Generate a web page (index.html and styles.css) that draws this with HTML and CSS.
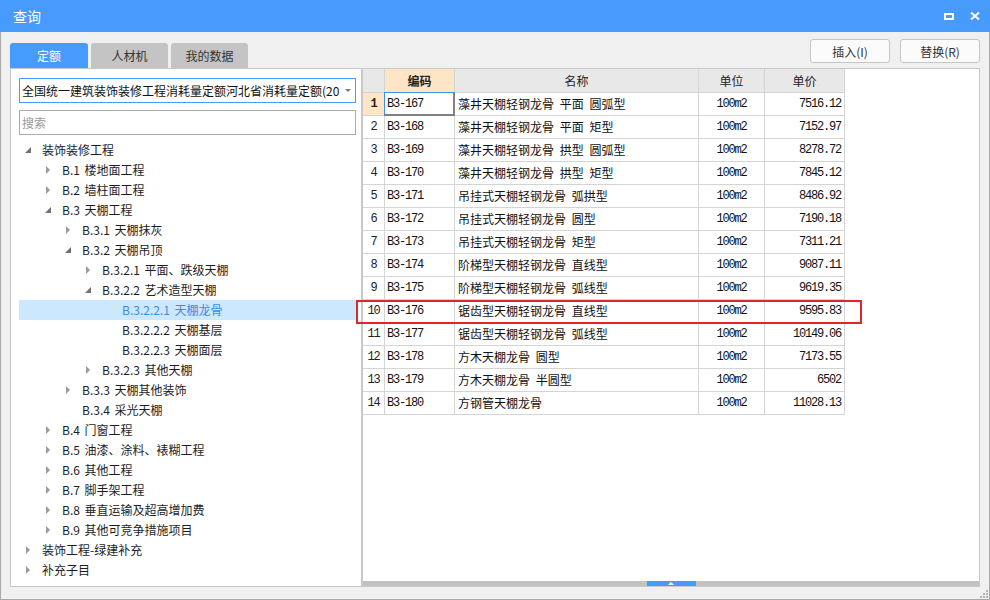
FILE: index.html
```html
<!DOCTYPE html>
<html lang="zh">
<head>
<meta charset="utf-8">
<title>查询</title>
<link rel="stylesheet" href="styles.css">
</head>
<body>
<div class="window">
  <div class="titlebar">
    <span class="title">查询</span>
    <div class="win-btns">
      <svg width="10" height="7" viewBox="0 0 10 7"><rect x="1" y="1" width="8" height="5" fill="none" stroke="#fff" stroke-width="2"/></svg>
      <svg width="10" height="8" viewBox="0 0 10 8"><path d="M1 0.5L9 7.5M9 0.5L1 7.5" stroke="#fff" stroke-width="2"/></svg>
    </div>
  </div>
  <div class="main">
    <div class="leftcol">
      <div class="tabs">
        <div class="tab active">定额</div>
        <div class="tab">人材机</div>
        <div class="tab">我的数据</div>
      </div>
      <div class="left-panel">
        <div class="combo">
          <span class="combo-text">全国统一建筑装饰装修工程消耗量定额河北省消耗量定额(2012)</span>
          <svg class="combo-arrow" width="6" height="4" viewBox="0 0 6 4"><path d="M0 0H6L3 3Z" fill="#7a7a7a"/></svg>
        </div>
        <div class="search">搜索</div>
        <div class="tree">
          <div class="node l0"><span class="toggle"><svg width="10" height="10" viewBox="0 0 10 10"><path d="M8 2V8H2Z" fill="#707070"/></svg></span>装饰装修工程</div>
          <div class="node l1"><span class="toggle"><svg width="10" height="10" viewBox="0 0 10 10"><path d="M3 1L7 5L3 9Z" fill="#9a9a9a"/></svg></span>B.1 楼地面工程</div>
          <div class="node l1"><span class="toggle"><svg width="10" height="10" viewBox="0 0 10 10"><path d="M3 1L7 5L3 9Z" fill="#9a9a9a"/></svg></span>B.2 墙柱面工程</div>
          <div class="node l1"><span class="toggle"><svg width="10" height="10" viewBox="0 0 10 10"><path d="M8 2V8H2Z" fill="#707070"/></svg></span>B.3 天棚工程</div>
          <div class="node l2"><span class="toggle"><svg width="10" height="10" viewBox="0 0 10 10"><path d="M3 1L7 5L3 9Z" fill="#9a9a9a"/></svg></span>B.3.1 天棚抹灰</div>
          <div class="node l2"><span class="toggle"><svg width="10" height="10" viewBox="0 0 10 10"><path d="M8 2V8H2Z" fill="#707070"/></svg></span>B.3.2 天棚吊顶</div>
          <div class="node l3"><span class="toggle"><svg width="10" height="10" viewBox="0 0 10 10"><path d="M3 1L7 5L3 9Z" fill="#9a9a9a"/></svg></span>B.3.2.1 平面、跌级天棚</div>
          <div class="node l3"><span class="toggle"><svg width="10" height="10" viewBox="0 0 10 10"><path d="M8 2V8H2Z" fill="#707070"/></svg></span>B.3.2.2 艺术造型天棚</div>
          <div class="node l4 selected"><span class="toggle"></span>B.3.2.2.1 天棚龙骨</div>
          <div class="node l4"><span class="toggle"></span>B.3.2.2.2 天棚基层</div>
          <div class="node l4"><span class="toggle"></span>B.3.2.2.3 天棚面层</div>
          <div class="node l3"><span class="toggle"><svg width="10" height="10" viewBox="0 0 10 10"><path d="M3 1L7 5L3 9Z" fill="#9a9a9a"/></svg></span>B.3.2.3 其他天棚</div>
          <div class="node l2"><span class="toggle"><svg width="10" height="10" viewBox="0 0 10 10"><path d="M3 1L7 5L3 9Z" fill="#9a9a9a"/></svg></span>B.3.3 天棚其他装饰</div>
          <div class="node l2"><span class="toggle"></span>B.3.4 采光天棚</div>
          <div class="node l1"><span class="toggle"><svg width="10" height="10" viewBox="0 0 10 10"><path d="M3 1L7 5L3 9Z" fill="#9a9a9a"/></svg></span>B.4 门窗工程</div>
          <div class="node l1"><span class="toggle"><svg width="10" height="10" viewBox="0 0 10 10"><path d="M3 1L7 5L3 9Z" fill="#9a9a9a"/></svg></span>B.5 油漆、涂料、裱糊工程</div>
          <div class="node l1"><span class="toggle"><svg width="10" height="10" viewBox="0 0 10 10"><path d="M3 1L7 5L3 9Z" fill="#9a9a9a"/></svg></span>B.6 其他工程</div>
          <div class="node l1"><span class="toggle"><svg width="10" height="10" viewBox="0 0 10 10"><path d="M3 1L7 5L3 9Z" fill="#9a9a9a"/></svg></span>B.7 脚手架工程</div>
          <div class="node l1"><span class="toggle"><svg width="10" height="10" viewBox="0 0 10 10"><path d="M3 1L7 5L3 9Z" fill="#9a9a9a"/></svg></span>B.8 垂直运输及超高增加费</div>
          <div class="node l1"><span class="toggle"><svg width="10" height="10" viewBox="0 0 10 10"><path d="M3 1L7 5L3 9Z" fill="#9a9a9a"/></svg></span>B.9 其他可竞争措施项目</div>
          <div class="node l0"><span class="toggle"><svg width="10" height="10" viewBox="0 0 10 10"><path d="M3 1L7 5L3 9Z" fill="#9a9a9a"/></svg></span>装饰工程-绿建补充</div>
          <div class="node l0"><span class="toggle"><svg width="10" height="10" viewBox="0 0 10 10"><path d="M3 1L7 5L3 9Z" fill="#9a9a9a"/></svg></span>补充子目</div>
        </div>
      </div>
    </div>
    <div class="rightcol">
      <div class="btnrow">
        <button class="btn">插入(I)</button>
        <button class="btn">替换(R)</button>
      </div>
      <div class="right-panel">
        <div class="grid">
          <div class="row head">
            <div class="c num"></div>
            <div class="c code-h">编码</div>
            <div class="c">名称</div>
            <div class="c">单位</div>
            <div class="c">单价</div>
          </div>
          <div class="row"><div class="c num cur">1</div><div class="c code focus">B3-167</div><div class="c name">藻井天棚轻钢龙骨 平面 圆弧型</div><div class="c unit">100m2</div><div class="c price">7516.12</div></div>
          <div class="row"><div class="c num">2</div><div class="c code">B3-168</div><div class="c name">藻井天棚轻钢龙骨 平面 矩型</div><div class="c unit">100m2</div><div class="c price">7152.97</div></div>
          <div class="row"><div class="c num">3</div><div class="c code">B3-169</div><div class="c name">藻井天棚轻钢龙骨 拱型 圆弧型</div><div class="c unit">100m2</div><div class="c price">8278.72</div></div>
          <div class="row"><div class="c num">4</div><div class="c code">B3-170</div><div class="c name">藻井天棚轻钢龙骨 拱型 矩型</div><div class="c unit">100m2</div><div class="c price">7845.12</div></div>
          <div class="row"><div class="c num">5</div><div class="c code">B3-171</div><div class="c name">吊挂式天棚轻钢龙骨 弧拱型</div><div class="c unit">100m2</div><div class="c price">8486.92</div></div>
          <div class="row"><div class="c num">6</div><div class="c code">B3-172</div><div class="c name">吊挂式天棚轻钢龙骨 圆型</div><div class="c unit">100m2</div><div class="c price">7190.18</div></div>
          <div class="row"><div class="c num">7</div><div class="c code">B3-173</div><div class="c name">吊挂式天棚轻钢龙骨 矩型</div><div class="c unit">100m2</div><div class="c price">7311.21</div></div>
          <div class="row"><div class="c num">8</div><div class="c code">B3-174</div><div class="c name">阶梯型天棚轻钢龙骨 直线型</div><div class="c unit">100m2</div><div class="c price">9087.11</div></div>
          <div class="row"><div class="c num">9</div><div class="c code">B3-175</div><div class="c name">阶梯型天棚轻钢龙骨 弧线型</div><div class="c unit">100m2</div><div class="c price">9619.35</div></div>
          <div class="row"><div class="c num">10</div><div class="c code">B3-176</div><div class="c name">锯齿型天棚轻钢龙骨 直线型</div><div class="c unit">100m2</div><div class="c price">9595.83</div></div>
          <div class="row"><div class="c num">11</div><div class="c code">B3-177</div><div class="c name">锯齿型天棚轻钢龙骨 弧线型</div><div class="c unit">100m2</div><div class="c price">10149.06</div></div>
          <div class="row"><div class="c num">12</div><div class="c code">B3-178</div><div class="c name">方木天棚龙骨 圆型</div><div class="c unit">100m2</div><div class="c price">7173.55</div></div>
          <div class="row"><div class="c num">13</div><div class="c code">B3-179</div><div class="c name">方木天棚龙骨 半圆型</div><div class="c unit">100m2</div><div class="c price">6502</div></div>
          <div class="row"><div class="c num">14</div><div class="c code">B3-180</div><div class="c name">方钢管天棚龙骨</div><div class="c unit">100m2</div><div class="c price">11028.13</div></div>
        </div>
        <div class="hscroll">
          <div class="thumb"><svg width="6" height="3" viewBox="0 0 6 3"><path d="M0 3L3 0L6 3Z" fill="#fff"/></svg></div>
        </div>
      </div>
    </div>
    <svg class="grip" width="8" height="8" viewBox="0 0 8 8">
      <rect x="6" y="0" width="2" height="2" fill="#b4b4b4"/>
      <rect x="3" y="3" width="2" height="2" fill="#b4b4b4"/>
      <rect x="6" y="3" width="2" height="2" fill="#b4b4b4"/>
      <rect x="0" y="6" width="2" height="2" fill="#b4b4b4"/>
      <rect x="3" y="6" width="2" height="2" fill="#b4b4b4"/>
      <rect x="6" y="6" width="2" height="2" fill="#b4b4b4"/>
    </svg>
  </div>
  <div class="mark"></div>
</div>
</body>
</html>
```
FILE: styles.css
```css
html, body {
  margin: 0;
  padding: 0;
}
body {
  width: 990px;
  height: 600px;
  overflow: hidden;
  font-family: "Noto Sans CJK SC", "Microsoft YaHei", sans-serif;
  font-size: 12px;
  color: #1e1e1e;
}
.window {
  position: relative;
  width: 990px;
  height: 600px;
  display: flex;
  flex-direction: column;
  background: #f0f0f0;
}
.titlebar {
  height: 32px;
  flex: none;
  background: #479bfd;
  color: #fff;
  display: flex;
  align-items: center;
  padding: 0 10px 0 13px;
  font-size: 14px;
}
.title {
  flex: 1;
}
.win-btns {
  display: flex;
  align-items: center;
  gap: 16px;
}
.win-btns svg {
  display: block;
}
.main {
  position: relative;
  flex: 1;
  display: flex;
  padding: 7px 9px 0 9px;
  border: 1px solid #a9a9a9;
  border-top: none;
}
.leftcol {
  width: 352px;
  flex: none;
  display: flex;
  flex-direction: column;
}
.tabs {
  margin-top: 4px;
  height: 25px;
  display: flex;
  gap: 3px;
}
.tab {
  width: 77px;
  height: 25px;
  line-height: 25px;
  text-align: center;
  background: #c4c4c4;
  color: #333;
  border-radius: 3px 3px 0 0;
  font-size: 12px;
}
.tab.active {
  width: 78px;
  background: #479bfd;
  color: #fff;
}
.left-panel {
  height: 519px;
  box-sizing: border-box;
  background: #fff;
  border: 1px solid #c8c8c8;
  padding: 9px 5px 0 8px;
}
.combo {
  height: 25px;
  box-sizing: border-box;
  border: 1px solid #4a9bff;
  display: flex;
  align-items: center;
  padding-left: 2px;
}
.combo-text {
  width: 317px;
  overflow: hidden;
  white-space: nowrap;
  color: #111;
}
.combo-arrow {
  margin-left: 6px;
  display: block;
}
.search {
  margin-top: 7px;
  height: 25px;
  box-sizing: border-box;
  border: 1px solid #ababab;
  line-height: 23px;
  padding-left: 2px;
  color: #9a9a9a;
}
.tree {
  margin-top: 5px;
}
.node {
  height: 20px;
  line-height: 20px;
  display: flex;
  align-items: center;
  white-space: pre;
  word-spacing: 2px;
  color: #1e1e1e;
}
.node.l0 { padding-left: 4px; }
.node.l1 { padding-left: 24px; }
.node.l2 { padding-left: 44px; }
.node.l3 { padding-left: 64px; }
.node.l4 { padding-left: 84px; }
.toggle {
  width: 19px;
  height: 20px;
  flex: none;
  display: flex;
  align-items: center;
}
.toggle svg {
  display: block;
}
.node.selected {
  background: #cce8ff;
  color: #3a8be6;
}
.rightcol {
  flex: 1;
  display: flex;
  flex-direction: column;
}
.btnrow {
  height: 24px;
  display: flex;
  justify-content: flex-end;
  gap: 10px;
  margin-bottom: 5px;
}
.btn {
  width: 80px;
  height: 24px;
  box-sizing: border-box;
  border: 1px solid #c6c6c6;
  border-radius: 3px;
  background: #fbfbfb;
  font-family: "Noto Sans CJK SC", "Microsoft YaHei", sans-serif;
  font-size: 12px;
  color: #333;
  padding: 0;
}
.right-panel {
  height: 519px;
  box-sizing: border-box;
  border: 1px solid #c8c8c8;
  background: #fff;
  display: flex;
  flex-direction: column;
}
.grid {
  flex: 1;
}
.row {
  display: grid;
  grid-template-columns: 22px 70px 244px 66px 80px;
  height: 23px;
}
.row.head {
  height: 24px;
}
.c {
  box-sizing: border-box;
  border-right: 1px solid #d4d4d4;
  border-bottom: 1px solid #d4d4d4;
  line-height: 22px;
  white-space: nowrap;
  overflow: hidden;
}
.head .c {
  background: #e8e8e8;
  text-align: center;
  line-height: 23px;
  color: #222;
}
.head .c.code-h {
  background: #fee5c6;
  font-weight: bold;
}
.num {
  text-align: center;
  font-family: "Liberation Mono", monospace;
  font-size: 12px;
  letter-spacing: -1.2px;
  color: #222;
}
.num.cur {
  background: #fee5c6;
  font-weight: bold;
}
.code {
  position: relative;
  overflow: visible;
  padding-left: 2px;
  font-family: "Liberation Mono", monospace;
  font-size: 12px;
  letter-spacing: -1.2px;
  color: #111;
}
.code.focus::after {
  content: "";
  position: absolute;
  left: -1px;
  top: -1px;
  right: -1px;
  bottom: -1px;
  border-top: 1px solid #3d8ff0;
  border-left: 1px solid #3d8ff0;
  border-right: 2px solid #808080;
  border-bottom: 2px solid #808080;
}
.name {
  padding-left: 3px;
  word-spacing: 3px;
  color: #111;
}
.unit {
  text-align: center;
  font-family: "Liberation Mono", monospace;
  font-size: 12px;
  letter-spacing: -1.2px;
  color: #111;
}
.price {
  text-align: right;
  padding-right: 3px;
  font-family: "Liberation Mono", monospace;
  font-size: 12px;
  letter-spacing: -1.2px;
  color: #111;
}
.hscroll {
  height: 5px;
  flex: none;
  background: #c2c2c2;
  display: flex;
  justify-content: center;
}
.thumb {
  width: 49px;
  height: 5px;
  background: #479bfd;
  display: flex;
  justify-content: center;
  align-items: center;
}
.thumb svg {
  display: block;
}
.grip {
  position: absolute;
  right: 1px;
  bottom: 1px;
}
.mark {
  position: absolute;
  left: 356px;
  top: 300px;
  width: 506px;
  height: 24px;
  box-sizing: border-box;
  border: 2px solid #e5232b;
}
```
